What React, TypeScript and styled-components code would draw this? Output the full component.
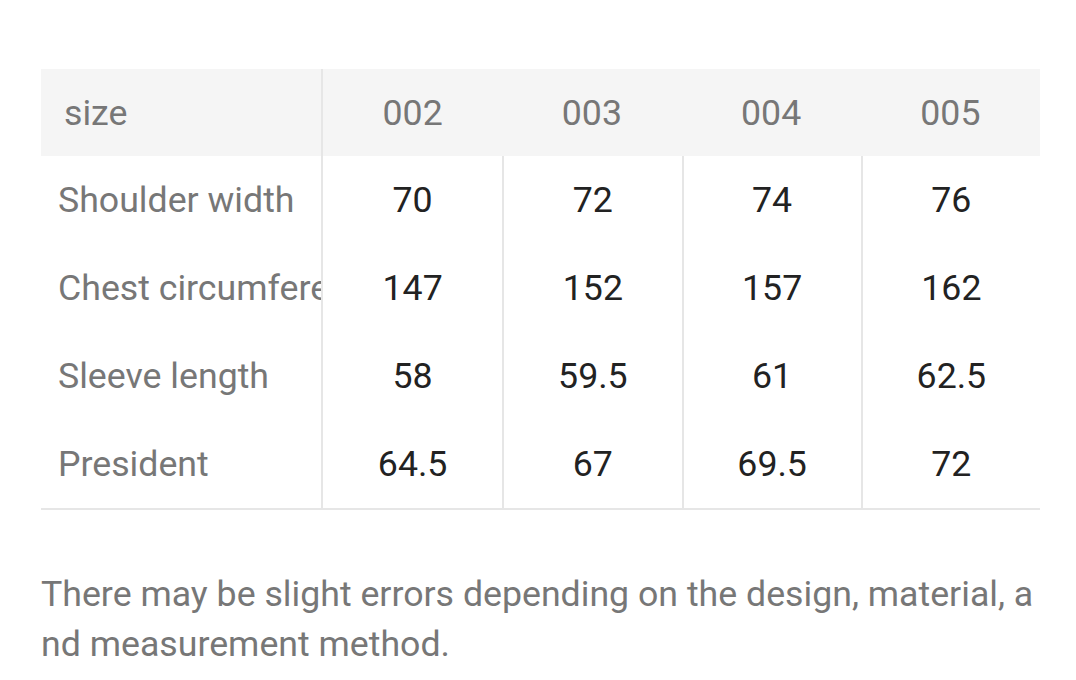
import React from 'react';
import styled, { createGlobalStyle } from 'styled-components';

const GlobalStyle = createGlobalStyle`
  body {
    margin: 0;
    background: #ffffff;
    font-family: Roboto, "Noto Sans", sans-serif;
  }
`;

const colors = {
  line: '#e6e6e6',
  headerBg: '#f5f5f5',
  label: '#777777',
  value: '#222222',
};

const textSize = '35.7px';

const Page = styled.div`
  width: 999px;
  padding: 69px 0 0 41px;
`;

const Table = styled.div`
  display: flex;
  flex-flow: column nowrap;
  border-bottom: 2px solid ${colors.line};
`;

const Row = styled.div<{ $header?: boolean }>`
  display: grid;
  grid-template-columns: 282px repeat(4, 1fr);
  height: ${({ $header }) => ($header ? 87 : 88)}px;
  background: ${({ $header }) => ($header ? colors.headerBg : 'transparent')};
`;

const LabelCell = styled.div<{ $header?: boolean }>`
  display: flex;
  align-items: center;
  padding-left: ${({ $header }) => ($header ? 23 : 17)}px;
  border-right: 2px solid ${colors.line};
  font-size: ${textSize};
  color: ${colors.label};
  white-space: nowrap;
  overflow: hidden;
`;

const ValueCell = styled.div<{ $header?: boolean; $divider?: boolean }>`
  display: flex;
  align-items: center;
  justify-content: center;
  font-size: ${textSize};
  color: ${({ $header }) => ($header ? colors.label : colors.value)};
  border-left: ${({ $divider }) => ($divider ? `2px solid ${colors.line}` : 'none')};
`;

const Note = styled.p`
  margin: 59px 0 0;
  width: 999px;
  font-size: ${textSize};
  line-height: 50px;
  color: ${colors.label};
  word-break: break-all;
`;

const sizes = ['002', '003', '004', '005'];

const rows: { label: string; values: string[] }[] = [
  { label: 'Shoulder width', values: ['70', '72', '74', '76'] },
  { label: 'Chest circumference', values: ['147', '152', '157', '162'] },
  { label: 'Sleeve length', values: ['58', '59.5', '61', '62.5'] },
  { label: 'President', values: ['64.5', '67', '69.5', '72'] },
];

const App = () => (
  <>
    <GlobalStyle />
    <Page>
      <Table>
        <Row $header>
          <LabelCell $header>size</LabelCell>
          {sizes.map((s) => (
            <ValueCell key={s} $header>{s}</ValueCell>
          ))}
        </Row>
        {rows.map((row) => (
          <Row key={row.label}>
            <LabelCell>{row.label}</LabelCell>
            {row.values.map((v, i) => (
              <ValueCell key={i} $divider={i > 0}>{v}</ValueCell>
            ))}
          </Row>
        ))}
      </Table>
      <Note>
        There may be slight errors depending on the design, material, and measurement method.
      </Note>
    </Page>
  </>
);

export default App;
